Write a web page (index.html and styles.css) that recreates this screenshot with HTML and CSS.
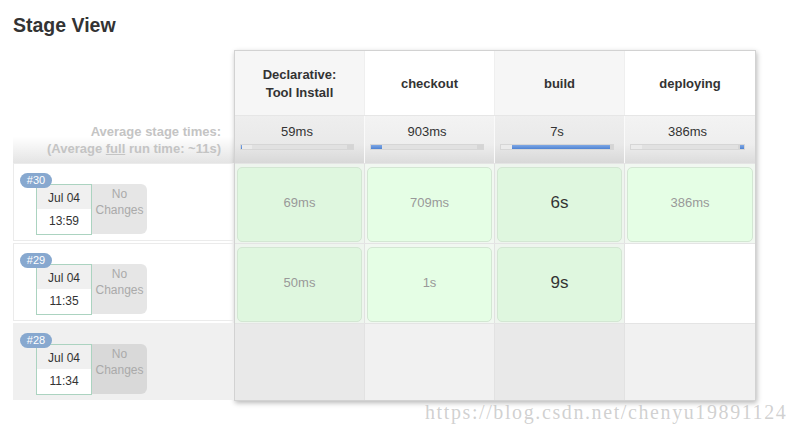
FILE: index.html
```html
<!DOCTYPE html>
<html>
<head>
<meta charset="utf-8">
<link rel="stylesheet" href="styles.css">
</head>
<body>
<div class="page">
  <h2 class="title">Stage View</h2>
  <div class="stage-view">
    <div class="runs">
      <div class="runs-head"></div>
      <div class="avg-label">Average stage times:<br>(Average <u>full</u> run time: ~11s)</div>
      <div class="run">
        <div class="run-box">
          <span class="badge">#30</span>
          <div class="date"><div class="day">Jul 04</div><div class="time">13:59</div></div>
          <div class="changes">No<br>Changes</div>
        </div>
      </div>
      <div class="run">
        <div class="run-box">
          <span class="badge">#29</span>
          <div class="date"><div class="day">Jul 04</div><div class="time">11:35</div></div>
          <div class="changes">No<br>Changes</div>
        </div>
      </div>
      <div class="run run-last">
        <div class="run-box">
          <span class="badge">#28</span>
          <div class="date"><div class="day">Jul 04</div><div class="time">11:34</div></div>
          <div class="changes">No<br>Changes</div>
        </div>
      </div>
    </div>
    <div class="table">
      <div class="row head">
        <div class="cell">Declarative:<br>Tool Install</div>
        <div class="cell">checkout</div>
        <div class="cell">build</div>
        <div class="cell">deploying</div>
      </div>
      <div class="row avg">
        <div class="cell"><div class="avg-time">59ms</div><div class="bar"><span class="fill" style="left:0;width:1px"></span></div></div>
        <div class="cell"><div class="avg-time">903ms</div><div class="bar"><span class="fill" style="left:0;width:11px"></span></div></div>
        <div class="cell"><div class="avg-time">7s</div><div class="bar"><span class="fill" style="left:11px;width:98px"></span></div></div>
        <div class="cell"><div class="avg-time">386ms</div><div class="bar"><span class="fill" style="left:109px;width:4px"></span></div></div>
      </div>
      <div class="row stages">
        <div class="cell ok"><div class="box">69ms</div></div>
        <div class="cell ok"><div class="box">709ms</div></div>
        <div class="cell ok"><div class="box big">6s</div></div>
        <div class="cell ok"><div class="box">386ms</div></div>
      </div>
      <div class="row stages">
        <div class="cell ok"><div class="box">50ms</div></div>
        <div class="cell ok"><div class="box">1s</div></div>
        <div class="cell ok"><div class="box big">9s</div></div>
        <div class="cell empty"></div>
      </div>
      <div class="row stages last">
        <div class="cell"></div>
        <div class="cell"></div>
        <div class="cell"></div>
        <div class="cell"></div>
      </div>
    </div>
  </div>
  <div class="watermark">https://blog.csdn.net/chenyu19891124</div>
</div>
</body>
</html>
```

FILE: styles.css
```css
html, body {
  margin: 0;
  padding: 0;
  background: #fff;
}
body {
  font-family: "Liberation Sans", Arial, sans-serif;
  color: #333;
  overflow: hidden;
}
.page {
  position: relative;
  width: 799px;
  height: 424px;
  padding-left: 13px;
  box-sizing: border-box;
}
.title {
  margin: 14px 0 0 0;
  font-size: 19.5px;
  line-height: 22px;
  font-weight: bold;
  color: #333;
}
.stage-view {
  display: flex;
  margin-top: 14px;
}
.runs {
  width: 221px;
  display: flex;
  flex-direction: column;
}
.runs-head {
  height: 65px;
}
.avg-label {
  height: 48px;
  box-sizing: border-box;
  padding: 8px 13px 0 0;
  text-align: right;
  font-size: 13px;
  line-height: 17px;
  font-weight: bold;
  color: #c4c4c4;
  background: linear-gradient(to bottom, #fff 0%, #fff 45%, #e4e4e4 100%);
}
.run {
  height: 80px;
}
.run-last {
  height: 77px;
}
.run-box {
  position: relative;
  height: 78px;
  box-sizing: border-box;
  border: 1px solid #ebebeb;
  border-right: none;
  display: flex;
  padding: 20px 0 0 22px;
}
.run-last .run-box {
  height: 77px;
  border-color: #f0f0f0;
  background: #f0f0f0;
}
.badge {
  position: absolute;
  left: 6px;
  top: 9px;
  width: 32px;
  height: 15px;
  border-radius: 8px;
  background: #87a8cf;
  color: #fff;
  font-size: 11px;
  line-height: 15px;
  text-align: center;
  z-index: 1;
}
.date {
  width: 56px;
  height: 51px;
  box-sizing: border-box;
  border: 1px solid #abd3c0;
  display: flex;
  flex-direction: column;
  font-size: 12px;
  color: #333;
  text-align: center;
}
.day {
  height: 24px;
  line-height: 26px;
  background: #f0f0f0;
}
.time {
  flex: 1;
  line-height: 25px;
  background: #fff;
}
.changes {
  width: 55px;
  height: 50px;
  box-sizing: border-box;
  background: #e6e6e6;
  border-radius: 0 6px 6px 0;
  color: #aaa;
  font-size: 12px;
  line-height: 16px;
  text-align: center;
  padding-top: 2px;
}
.run-last .changes {
  background: #d9d9d9;
}
.table {
  width: 522px;
  box-sizing: border-box;
  border: 1px solid #d2d2d2;
  box-shadow: 1px 2px 5px rgba(0, 0, 0, 0.28);
  background: #fff;
}
.row {
  display: grid;
  grid-template-columns: repeat(4, 130px);
}
.head {
  height: 64px;
}
.head .cell {
  display: flex;
  align-items: center;
  justify-content: center;
  text-align: center;
  font-size: 13px;
  line-height: 18px;
  font-weight: bold;
  color: #333;
  padding-top: 2px;
  box-sizing: border-box;
  border-right: 1px solid #efefef;
}
.head .cell:nth-child(odd) {
  background: #f6f6f6;
}
.head .cell:last-child,
.avg .cell:last-child,
.stages .cell:last-child {
  border-right: none;
}
.avg {
  height: 48px;
  border-top: 1px solid #e6e6e6;
  box-sizing: border-box;
}
.avg .cell {
  box-sizing: border-box;
  padding: 8px 10px 0 5px;
  background: linear-gradient(to bottom, #f3f3f3 0%, #eeeeee 60%, #dcdcdc 100%);
  border-right: 1px solid #fafafa;
}
.avg .cell:nth-child(odd) {
  background: linear-gradient(to bottom, #eeeeee 0%, #e9e9e9 60%, #d8d8d8 100%);
}
.avg-time {
  text-align: center;
  font-size: 13px;
  line-height: 16px;
  color: #333;
}
.bar {
  position: relative;
  margin-top: 4px;
  height: 6px;
  box-sizing: border-box;
  border: 1px solid #d6d6d6;
  background: #e1e1e1;
}
.bar::before {
  content: "";
  position: absolute;
  left: 0;
  top: 0;
  width: 11px;
  height: 4px;
  background: #ebebeb;
}
.bar::after {
  content: "";
  position: absolute;
  right: 0;
  top: 0;
  width: 6px;
  height: 4px;
  background: #d5d5d5;
}
.fill {
  position: absolute;
  top: 0;
  height: 4px;
  background: linear-gradient(to bottom, #7ea7e4, #4f83d3);
  z-index: 1;
}
.stages {
  height: 80px;
  border-top: 1px solid #e4e4e4;
  box-sizing: border-box;
}
.stages.last {
  height: 77px;
}
.stages .cell {
  box-sizing: border-box;
  border-right: 1px solid #e2e2e2;
}
.stages .cell.ok {
  background: #eef5ee;
  padding: 3px 2px 1px 2px;
}
.stages .cell.ok:nth-child(even) {
  background: #f1f8f1;
}
.stages .cell.empty {
  background: #fff;
}
.stages.last .cell {
  background: #e9e9e9;
}
.stages.last .cell:nth-child(even) {
  background: #f1f1f1;
}
.box {
  height: 100%;
  box-sizing: border-box;
  border: 1px solid #d3e6d3;
  border-radius: 5px;
  background: #dff7df;
  display: flex;
  align-items: center;
  justify-content: center;
  padding-bottom: 4px;
  font-size: 13px;
  color: #999;
}
.cell:nth-child(even) .box {
  background: #e5fee5;
}
.box.big {
  font-size: 17px;
  color: #333;
}
.watermark {
  position: absolute;
  left: 425px;
  top: 386px;
  font-family: "Liberation Serif", "Times New Roman", serif;
  font-size: 20px;
  line-height: 24px;
  letter-spacing: 1.6px;
  color: rgba(170, 170, 170, 0.55);
  white-space: nowrap;
}
```
